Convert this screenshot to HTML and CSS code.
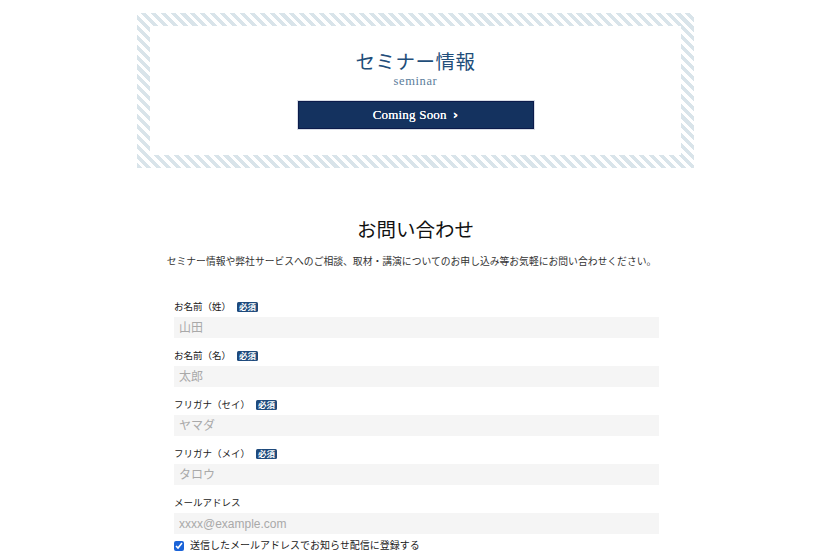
FILE: index.html
```html
<!doctype html>
<html lang = "ja">
    <head>
        <meta charset = "utf-8" />
        <meta name = "viewport" content = "width=device-width, initial-scale=1.0">
        <link rel="stylesheet" href="styles.css">
        <title>お問い合わせ</title>
    </head>
    <body>
        <div class = "page">
            <section class = "seminar">
                <div class = "seminar-inner">
                    <h2 class = "seminar-title">セミナー情報</h2>
                    <p class = "seminar-sub">seminar</p>
                    <a class = "seminar-btn" href = "#">Coming Soon <span class = "chev">›</span></a>
                </div>
            </section>

            <section class = "contact">
                <h2 class = "contact-title">お問い合わせ</h2>
                <p class = "contact-lead">セミナー情報や弊社サービスへのご相談、取材・講演についてのお申し込み等お気軽にお問い合わせください。</p>

                <form class = "form">
                    <div class = "field">
                        <label class = "label">お名前（姓）<span class = "req">必須</span></label>
                        <input class = "input" type = "text" placeholder = "山田">
                    </div>
                    <div class = "field">
                        <label class = "label">お名前（名）<span class = "req">必須</span></label>
                        <input class = "input" type = "text" placeholder = "太郎">
                    </div>
                    <div class = "field">
                        <label class = "label">フリガナ（セイ）<span class = "req">必須</span></label>
                        <input class = "input" type = "text" placeholder = "ヤマダ">
                    </div>
                    <div class = "field">
                        <label class = "label">フリガナ（メイ）<span class = "req">必須</span></label>
                        <input class = "input" type = "text" placeholder = "タロウ">
                    </div>
                    <div class = "field field-mail">
                        <label class = "label">メールアドレス</label>
                        <input class = "input" type = "email" placeholder = "xxxx@example.com">
                    </div>
                    <label class = "check"><input type = "checkbox" checked> 送信したメールアドレスでお知らせ配信に登録する</label>
                </form>
            </section>
        </div>
    </body>
</html>
```

FILE: styles.css
```css
* {
    margin: 0px;
    padding: 0px;
    box-sizing: border-box;
}
body {
    background-color: #fff;
    color: #222;
    font-family: "Liberation Serif", "Noto Sans CJK JP", serif;
}
.page {
    width: 831px;
    padding-top: 13px;
}
.seminar {
    width: 557px;
    margin: 0 auto;
    padding: 13px;
    background: repeating-linear-gradient(45deg, #d9e4ea 0px, #d9e4ea 3.6px, #fff 3.6px, #fff 7px);
}
.seminar-inner {
    background-color: #fff;
    display: flex;
    flex-direction: column;
    align-items: center;
    padding: 25px 0 26px;
}
.seminar-title {
    font-size: 19.5px;
    font-weight: normal;
    line-height: 24px;
    color: #1f4e7a;
    letter-spacing: 0.5px;
}
.seminar-sub {
    font-size: 12.5px;
    line-height: 13px;
    color: #5b7d9b;
    letter-spacing: 0.6px;
}
.seminar-btn {
    margin-top: 13px;
    width: 236px;
    height: 28px;
    display: flex;
    align-items: center;
    justify-content: center;
    gap: 6px;
    background-color: #14325f;
    border: 1px solid #0b1b4b;
    box-shadow: 0 0 0 1px #d8dde6;
    color: #fff;
    font-size: 13px;
    text-decoration: none;
    letter-spacing: 0.2px;
    text-shadow: 0 0 0.4px #fff;
}
.chev {
    font-size: 13px;
    font-family: "DejaVu Sans", sans-serif;
    font-weight: bold;
    margin-top: -1px;
}
.contact {
    margin-top: 48px;
    display: flex;
    flex-direction: column;
    align-items: center;
}
.contact-title {
    font-size: 19.5px;
    font-weight: normal;
    line-height: 30px;
    color: #111;
}
.contact-lead {
    margin-top: 6px;
    font-size: 9.8px;
    line-height: 20px;
    color: #333;
    padding-right: 8px;
}
.form {
    width: 485px;
    margin-top: 27px;
    margin-left: 2px;
    display: flex;
    flex-direction: column;
}
.field {
    display: flex;
    flex-direction: column;
    gap: 2px;
    margin-bottom: 10px;
}
.field-mail {
    margin-bottom: 4px;
}
.label {
    font-size: 9.5px;
    line-height: 16px;
    color: #222;
    display: flex;
    align-items: center;
}
.req {
    margin-left: 6px;
    background-color: #1e4a7c;
    color: #fff;
    font-size: 8.5px;
    line-height: 10px;
    padding: 0 2px;
    border-radius: 1.5px;
    font-weight: bold;
}
.input {
    height: 21px;
    border: none;
    background-color: #f5f5f5;
    padding: 0 5px;
    font-size: 12px;
    font-family: "Liberation Sans", "Noto Sans CJK JP", sans-serif;
    color: #333;
}
.input::placeholder {
    color: #a9a9a9;
}
.check {
    display: flex;
    align-items: center;
    gap: 6px;
    font-size: 10px;
    line-height: 16px;
    color: #222;
}
.check input {
    width: 10px;
    height: 10px;
    margin: 0;
    accent-color: #1a63d8;
}
```
